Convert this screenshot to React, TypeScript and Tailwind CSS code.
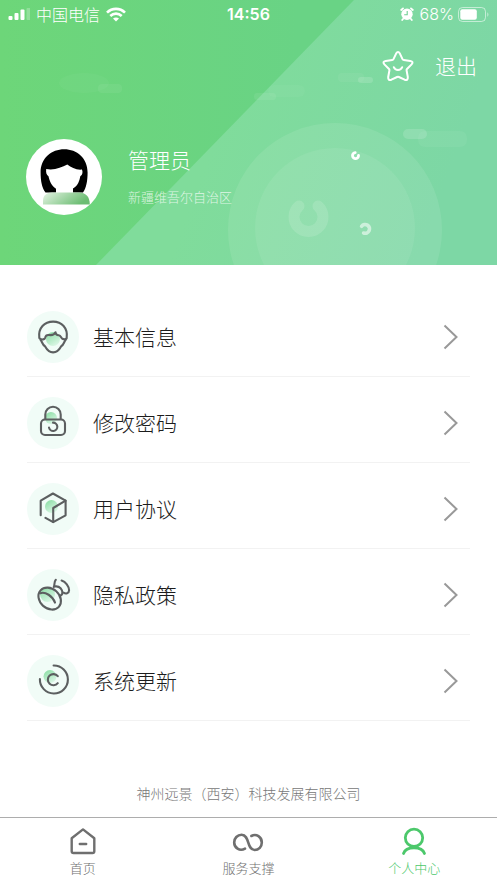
import React from 'react';

interface MenuItem {
  label: string;
  icon: React.ReactNode;
}

const IconBadge: React.FC<{ id: string; cx: number; cy: number; r: number; children: React.ReactNode }> = ({
  id,
  cx,
  cy,
  r,
  children,
}) => (
  <svg viewBox="0 0 52 52" className="size-13 shrink-0" fill="none" aria-hidden="true">
    <defs>
      <linearGradient id={id} x1="0" y1="0" x2="0.6" y2="1">
        <stop offset="0" stopColor="#86dca0" />
        <stop offset="1" stopColor="#d9f6e4" />
      </linearGradient>
    </defs>
    <circle cx="26" cy="26" r="26" fill="#f1fcf7" />
    <circle cx={cx} cy={cy} r={r} fill={`url(#${id})`} />
    <g stroke="#5c5f60" strokeWidth="2.1" strokeLinecap="round" strokeLinejoin="round">
      {children}
    </g>
  </svg>
);

const menuItems: MenuItem[] = [
  {
    label: '基本信息',
    icon: (
      <IconBadge id="face" cx={26} cy={28} r={7}>
        <path d="M12.3 26.8C11 17 17.5 10.6 26.1 10.6S41 17 39.7 26.8" />
        <path d="M12.8 27.7C15.2 29 17.6 28.6 18.2 26.6C18.7 24.4 20 23.7 22 24C24.8 24.4 27.5 23.5 28.5 21.3C28.8 23.5 30 24.3 31.8 24.2C34 24.3 34 27.2 35.4 27.8C36.8 28.4 38.4 28.2 39.4 27.7" />
        <path d="M13.6 29C15.2 30.6 15.4 34 18 35.3C20.2 39.4 23 41.4 26.1 41.4S32 39.4 34.2 35.3C36.8 34 37 30.6 38.6 29" />
      </IconBadge>
    ),
  },
  {
    label: '修改密码',
    icon: (
      <IconBadge id="lock" cx={24} cy={21} r={6}>
        <path d="M18.3 22V17.5A7.7 7.7 0 0 1 33.7 17.5V22" />
        <rect x="14" y="22.5" width="24" height="15.5" rx="4" />
        <path d="M26 25.6A4.2 4.2 0 1 1 22 30.6" />
      </IconBadge>
    ),
  },
  {
    label: '用户协议',
    icon: (
      <IconBadge id="cube" cx={24.5} cy={23.5} r={6.5}>
        <path d="M13.7 32.3V17.7L25.9 10.5L38.6 17.7V32.3L26.2 39.2L18.5 34.8" />
        <path d="M38.6 17.7L26.2 25V39" />
      </IconBadge>
    ),
  },
  {
    label: '隐私政策',
    icon: (
      <IconBadge id="stamp" cx={20.5} cy={25.5} r={7.5}>
        <ellipse cx="22.7" cy="29.6" rx="12.3" ry="9.8" transform="rotate(42 22.7 29.6)" />
        <path d="M13.2 24.2C18.4 22.4 25.6 27 28 33.6" />
        <path d="M28.8 10.8C26.8 13 28 15.2 26.8 18" />
        <path d="M28.4 17.4C32.6 17 35.8 20.2 35.4 24.6C34.8 25.6 34.2 26.2 33.2 26.8" />
        <path d="M34.6 11.5C38.6 12.8 42 17.2 42.1 21.3C42 24.6 38.8 25.3 36.4 23.5" />
      </IconBadge>
    ),
  },
  {
    label: '系统更新',
    icon: (
      <IconBadge id="update" cx={23} cy={21.5} r={6.5}>
        <path d="M26.6 10.5A14 14 0 1 1 12.9 24" />
        <path d="M30.8 21.2A5.6 5.6 0 1 0 30.8 28.2" />
      </IconBadge>
    ),
  },
];

const HeaderArt: React.FC = () => (
  <svg
    className="absolute inset-0 h-full w-full"
    viewBox="0 0 497 265"
    preserveAspectRatio="xMidYMid slice"
    aria-hidden="true"
  >
    <defs>
      <linearGradient id="base" x1="0" y1="0" x2="1" y2="0">
        <stop offset="0" stopColor="#6dd679" />
        <stop offset="0.6" stopColor="#69d385" />
      </linearGradient>
      <linearGradient id="slope" gradientUnits="userSpaceOnUse" x1="220" y1="120" x2="440" y2="200">
        <stop offset="0" stopColor="#80dc9b" />
        <stop offset="1" stopColor="#7dd7a5" />
      </linearGradient>
    </defs>
    <rect width="497" height="265" fill="url(#base)" />
    <path d="M354 0H497V265H96Z" fill="url(#slope)" />

    {/* Clouds */}
    <g fill="#fff">
      <ellipse cx="84" cy="83" rx="25" ry="10" opacity="0.03" />
      <rect x="98" y="84" width="24" height="9" rx="4" opacity="0.06" />
      <rect x="338" y="73" width="26" height="9" rx="4" opacity="0.05" />
      <rect x="358" y="77" width="15" height="6" rx="3" opacity="0.14" />
      <rect x="254" y="93" width="22" height="7" rx="3" opacity="0.07" />
      <rect x="268" y="85" width="37" height="12" rx="6" opacity="0.03" />
      <rect x="403" y="129" width="24" height="10" rx="5" opacity="0.14" />
      <rect x="418" y="131" width="49" height="16" rx="7" opacity="0.05" />
    </g>

    {/* Rings */}
    <circle cx="335" cy="230" r="107" fill="#fff" opacity="0.09" />
    <circle cx="335" cy="228" r="80" fill="#fff" opacity="0.07" />
    <g fill="none" stroke="#fff" strokeLinecap="round">
      <path d="M299 206A14.5 14.5 0 1 0 318 206" strokeWidth="11" opacity="0.13" />
      <path d="M355.2 152.6A3 3 0 1 0 358.5 155.3" strokeWidth="2.8" />
      <path d="M361.6 226.3A4.4 4.4 0 1 1 363.6 233" strokeWidth="3.6" opacity="0.55" />
    </g>
  </svg>
);

const StatusBar: React.FC = () => (
  <div className="grid h-7 grid-cols-3 items-center px-2 text-white">
    <div className="flex items-center gap-1.5">
      <svg viewBox="0 0 22 12" className="h-3 w-[22px]" fill="currentColor" aria-hidden="true">
        <rect x="0.5" y="8" width="4" height="4" rx="1" />
        <rect x="6.5" y="5" width="4" height="7" rx="1" />
        <rect x="12.5" y="1.5" width="4" height="10.5" rx="1" />
        <rect x="18.5" y="0" width="4" height="12" rx="1" opacity="0.25" />
      </svg>
      <span className="text-base leading-6 font-light whitespace-nowrap">中国电信</span>
      <svg viewBox="0 0 20 15" className="h-[15px] w-5" fill="none" stroke="currentColor" strokeWidth="2.6" aria-hidden="true">
        <path d="M1 5.6C6 0.6 14 0.6 19 5.6" />
        <path d="M4.3 9C7.6 5.8 12.4 5.8 15.7 9" />
        <path d="M10 14.6L7 11.6C8.6 10 11.4 10 13 11.6Z" fill="currentColor" stroke="none" />
      </svg>
    </div>
    <span className="text-center font-['Inter','Liberation_Sans',sans-serif] text-base leading-6 font-semibold">14:56</span>
    <div className="flex items-center justify-end gap-1">
      <svg viewBox="0 0 14 14" className="mr-0.5 size-3.5" aria-hidden="true">
        <circle cx="7" cy="7.2" r="5.7" fill="#fff" />
        <path d="M1.2 3L3 1.4M11 1.4L12.8 3M3 12L2.2 13M11 12L11.8 13" stroke="#fff" strokeWidth="1.8" strokeLinecap="round" />
        <path d="M7.2 4V7.8H4.2" fill="none" stroke="#6fcf94" strokeWidth="1.1" />
      </svg>
      <span className="font-['Inter','Liberation_Sans',sans-serif] text-base leading-6">68%</span>
      <svg viewBox="0 0 31 15" className="h-[15px] w-[31px]" aria-hidden="true">
        <rect x="0.5" y="0.5" width="27" height="14" rx="4" fill="none" stroke="#fff" opacity="0.55" />
        <rect x="2.3" y="2.3" width="16.5" height="10.4" rx="2" fill="#fff" />
        <path d="M29.3 5.2C30.8 6 30.8 9 29.3 9.8Z" fill="#fff" opacity="0.55" />
      </svg>
    </div>
  </div>
);

const Avatar: React.FC = () => (
  <svg viewBox="0 0 76 76" className="size-19 shrink-0" role="img" aria-label="管理员">
    <defs>
      <linearGradient id="shirt" x1="0" y1="0" x2="1" y2="0.35">
        <stop offset="0" stopColor="#e4f3e3" />
        <stop offset="1" stopColor="#6cbd73" />
      </linearGradient>
    </defs>
    <circle cx="38" cy="38" r="38" fill="#fff" />
    <path
      d="M19.5 53.5C16 49 14.6 42 14.6 33.5C14.6 19 25.5 10.3 38.2 10.3S61.6 19 61.6 33.5C61.6 42 60.2 49 57 53.5H47V49.5C52.3 46.4 53.3 42 54.3 37.3C56.6 36 57 33 56 30.6C50 31.2 45.5 28.6 41.3 25.6C35.6 28.7 28 31.5 20.2 30C19.8 33.4 20.4 36 22.5 37.3C23.5 42 25.5 46.8 30 49.8V53.5Z"
      fill="#000"
    />
    <path d="M17 65.5V62C17 56.5 20.5 53.6 26 53.6H53C59.5 53.6 63.8 57.5 63.8 65.5Z" fill="url(#shirt)" />
  </svg>
);

const tabs = [
  {
    label: '首页',
    active: false,
    icon: (
      <>
        <path d="M4.7 12.2L16 3.4L27.3 12.2V25.2Q27.3 27 25.5 27H6.5Q4.7 27 4.7 25.2Z" strokeWidth="2.4" />
        <path d="M12.8 18H19.2" strokeWidth="2.4" />
      </>
    ),
  },
  {
    label: '服务支撑',
    active: false,
    icon: (
      <path
        d="M13 22.6C7.6 25.8 2.2 21.6 2.2 16.4C2.2 12.2 5.4 8.8 9.6 8.8C18 8.8 14.4 24 22.6 24C26.8 24 29.8 20.6 29.8 16.4C29.8 11.2 24.4 7.2 19.4 10"
        strokeWidth="2.6"
      />
    ),
  },
  {
    label: '个人中心',
    active: true,
    icon: (
      <>
        <circle cx="16" cy="11.8" r="8.7" strokeWidth="2.8" />
        <path d="M5.5 27.5C8 19.8 24 19.8 26.5 27.5" strokeWidth="2.8" />
      </>
    ),
  },
];

export default function App() {
  return (
    <div className="flex min-h-screen flex-col bg-white font-['Noto_Sans_CJK_SC',sans-serif] font-light">
      <header className="relative overflow-hidden pb-[50px] text-white">
        <HeaderArt />
        <div className="relative">
          <StatusBar />
          <div className="flex items-center justify-end gap-[21px] px-5 pt-5">
            <button type="button" aria-label="收藏" className="pt-0.5">
              <svg viewBox="0 0 32 32" className="size-8" fill="none" stroke="#fff" strokeWidth="2" strokeLinecap="round" strokeLinejoin="round">
                <path d="M14.1 3.6Q16 0.4 17.9 3.6L20.5 9.1Q20.9 9.9 21.8 10L28.3 10.9Q32 11.6 29.6 14.4L25 19Q24.4 19.6 24.6 20.5L25.8 27Q26.1 30.9 22.6 29.7L16.9 27Q16 26.6 15.1 27L9.4 29.7Q5.9 30.9 6.2 27L7.4 20.5Q7.6 19.6 7 19L2.4 14.4Q0 11.6 3.7 10.9L10.2 10Q11.1 9.9 11.5 9.1Z" />
                <path d="M11.8 17.2C13.4 21 18.6 21 20.2 17.2" />
              </svg>
            </button>
            <button type="button" className="text-[21px] leading-8">退出</button>
          </div>
          <div className="mt-[57px] flex items-center px-[26px]">
            <Avatar />
            <div className="ml-[26px] flex flex-col gap-3 pb-1">
              <h1 className="text-[21px] leading-8">管理员</h1>
              <p className="text-[13px] leading-5 text-white/75">新疆维吾尔自治区</p>
            </div>
          </div>
        </div>
      </header>

      <main className="flex flex-1 flex-col px-[27px] pt-[26px]">
        <ul>
          {menuItems.map((item) => (
            <li key={item.label} className="border-b border-[#f2f2f2]">
              <button type="button" className="flex w-full items-center pt-5 pb-[13px] text-left">
                {item.icon}
                <span className="ml-3.5 flex-1 pb-0.5 text-[21px] leading-8 text-[#1c1c1c]">{item.label}</span>
                <svg viewBox="0 0 16 26" className="mr-[11px] h-[26px] w-4" fill="none" stroke="#999" strokeWidth="2" aria-hidden="true">
                  <path d="M1.5 1.5L13.5 13L1.5 24.5" />
                </svg>
              </button>
            </li>
          ))}
        </ul>
        <p className="mt-auto pt-8 pb-3 text-center text-sm leading-6 text-[#777]">
          神州远景（西安）科技发展有限公司
        </p>
      </main>

      <nav className="grid grid-cols-3 border-t border-[#adadad] pt-2 pb-[5px]">
        {tabs.map((tab) => (
          <a
            key={tab.label}
            href="#"
            className={`flex flex-col items-center ${tab.active ? 'text-[#4cc86b]' : 'text-[#6f6f6f]'}`}
          >
            <svg viewBox="0 0 32 32" className="size-8" fill="none" stroke="currentColor" strokeWidth="2" strokeLinecap="round" strokeLinejoin="round" aria-hidden="true">
              {tab.icon}
            </svg>
            <span className="text-[13px] leading-5">{tab.label}</span>
          </a>
        ))}
      </nav>
    </div>
  );
}
